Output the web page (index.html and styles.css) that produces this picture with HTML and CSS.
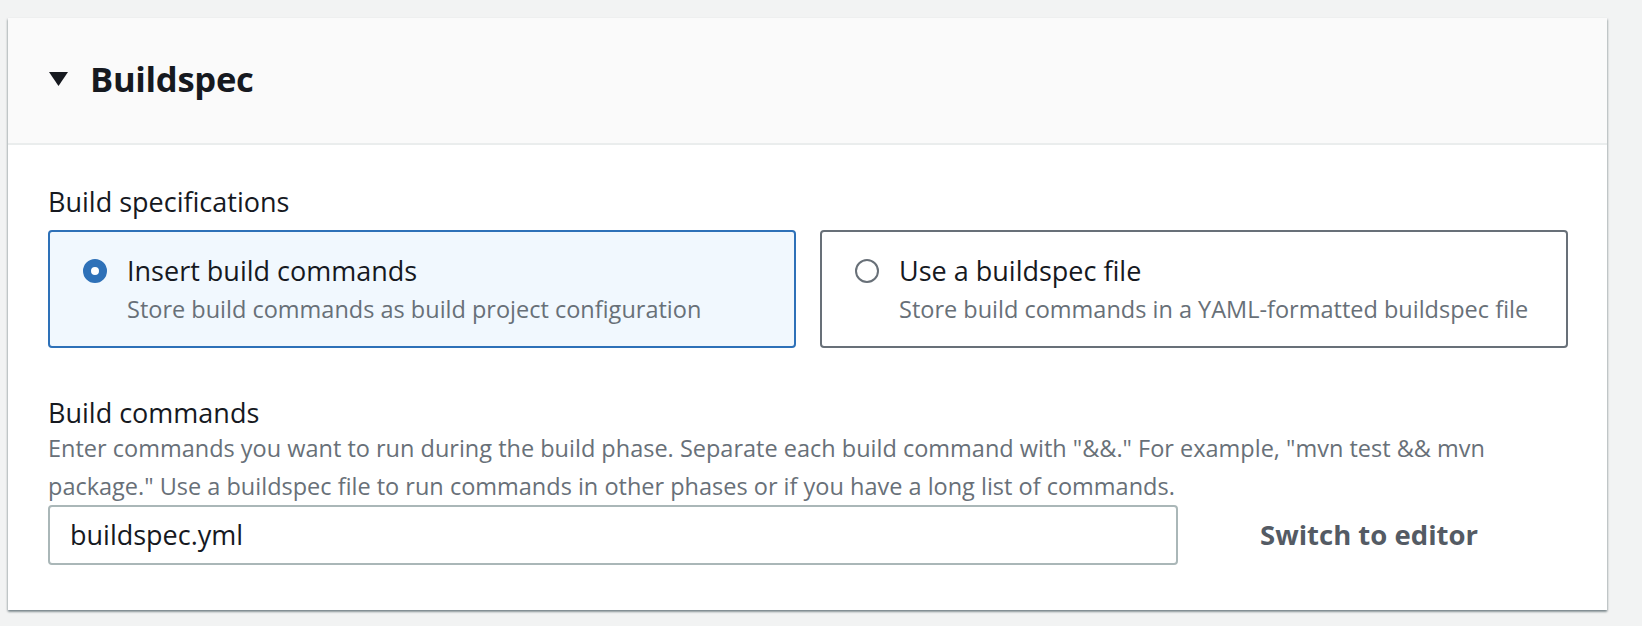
FILE: index.html
```html
<!DOCTYPE html>
<html lang="en">
<head>
<meta charset="utf-8">
<title>Buildspec</title>
<link rel="stylesheet" href="styles.css">
</head>
<body>
<section class="card">
  <header class="card-header">
    <svg class="caret" width="19" height="14" viewBox="0 0 19 14"><polygon points="0,0 19,0 9.5,14" fill="#16191f"/></svg>
    <h2 class="title">Buildspec</h2>
  </header>
  <div class="card-body">
    <div class="label">Build specifications</div>
    <div class="tiles">
      <div class="tile tile-selected">
        <span class="radio radio-on"></span>
        <div class="tile-text">
          <div class="tile-label">Insert build commands</div>
          <div class="tile-desc">Store build commands as build project configuration</div>
        </div>
      </div>
      <div class="tile">
        <span class="radio"></span>
        <div class="tile-text">
          <div class="tile-label">Use a buildspec file</div>
          <div class="tile-desc">Store build commands in a YAML-formatted buildspec file</div>
        </div>
      </div>
    </div>
    <div class="label label-commands">Build commands</div>
    <div class="desc">Enter commands you want to run during the build phase. Separate each build command with "&amp;&amp;." For example, "mvn test &amp;&amp; mvn package." Use a buildspec file to run commands in other phases or if you have a long list of commands.</div>
    <div class="field-row">
      <div class="input">buildspec.yml</div>
      <button class="link-btn" type="button">Switch to editor</button>
    </div>
  </div>
</section>
</body>
</html>
```
FILE: styles.css
```css
html, body {
  margin: 0;
  padding: 0;
}
body {
  background: #f2f3f3;
  font-family: "Open Sans", "Noto Sans", sans-serif;
  color: #16191f;
  width: 1642px;
  height: 626px;
  overflow: hidden;
}
.card {
  margin: 18px 0 0 8px;
  width: 1599px;
  height: 592px;
  background: #fff;
  box-shadow: 0 2px 2px 0 rgba(0, 28, 36, 0.35), 1px 1px 2px 0 rgba(0, 28, 36, 0.15), -1px 1px 2px 0 rgba(0, 28, 36, 0.15);
  display: flex;
  flex-direction: column;
}
.card-header {
  height: 127px;
  box-sizing: border-box;
  background: #fafafa;
  border-bottom: 2px solid #eaeded;
  display: flex;
  align-items: center;
  padding: 0 0 4px 41px;
}
.caret {
  display: block;
  margin-right: 22px;
}
.title {
  margin: 0;
  font-size: 34.6px;
  font-weight: 700;
  line-height: 44px;
  letter-spacing: -0.3px;
}
.card-body {
  padding: 39px 40px 0 40px;
}
.label {
  font-size: 27px;
  line-height: 36px;
  color: #16191f;
}
.tiles {
  display: grid;
  grid-template-columns: 748px 748px;
  column-gap: 24px;
  margin-top: 10px;
}
.tile {
  box-sizing: border-box;
  height: 118px;
  border: 2px solid #687078;
  border-radius: 4px;
  padding: 17px 20px 0 33px;
  display: flex;
  align-items: flex-start;
}
.tile-selected {
  background: #f1f8fe;
  border-color: #2e71b8;
}
.radio {
  box-sizing: border-box;
  flex: 0 0 24px;
  width: 24px;
  height: 24px;
  margin-top: 10px;
  margin-right: 20px;
  border-radius: 50%;
  border: 2px solid #687078;
  background: #fff;
}
.radio-on {
  border: 8px solid #2e71b8;
}
.tile-label {
  font-size: 27px;
  line-height: 44px;
}
.tile-desc {
  font-size: 23.5px;
  line-height: 33px;
  color: #687078;
}
.label-commands {
  margin-top: 47px;
}
.desc {
  font-size: 23.5px;
  line-height: 38px;
  color: #687078;
  margin-top: -2px;
}
.field-row {
  display: flex;
  align-items: center;
  margin-top: 0;
}
.input {
  box-sizing: border-box;
  flex: 0 0 1130px;
  height: 60px;
  border: 2px solid #aab7b8;
  border-radius: 4px;
  padding: 0 20px;
  font-size: 27px;
  line-height: 56px;
  color: #16191f;
}
.link-btn {
  margin-left: 42px;
  padding: 0 40px;
  border: none;
  background: transparent;
  font-family: "Open Sans", "Noto Sans", sans-serif;
  font-size: 27.5px;
  font-weight: 700;
  color: #545b64;
  line-height: 40px;
}
```
